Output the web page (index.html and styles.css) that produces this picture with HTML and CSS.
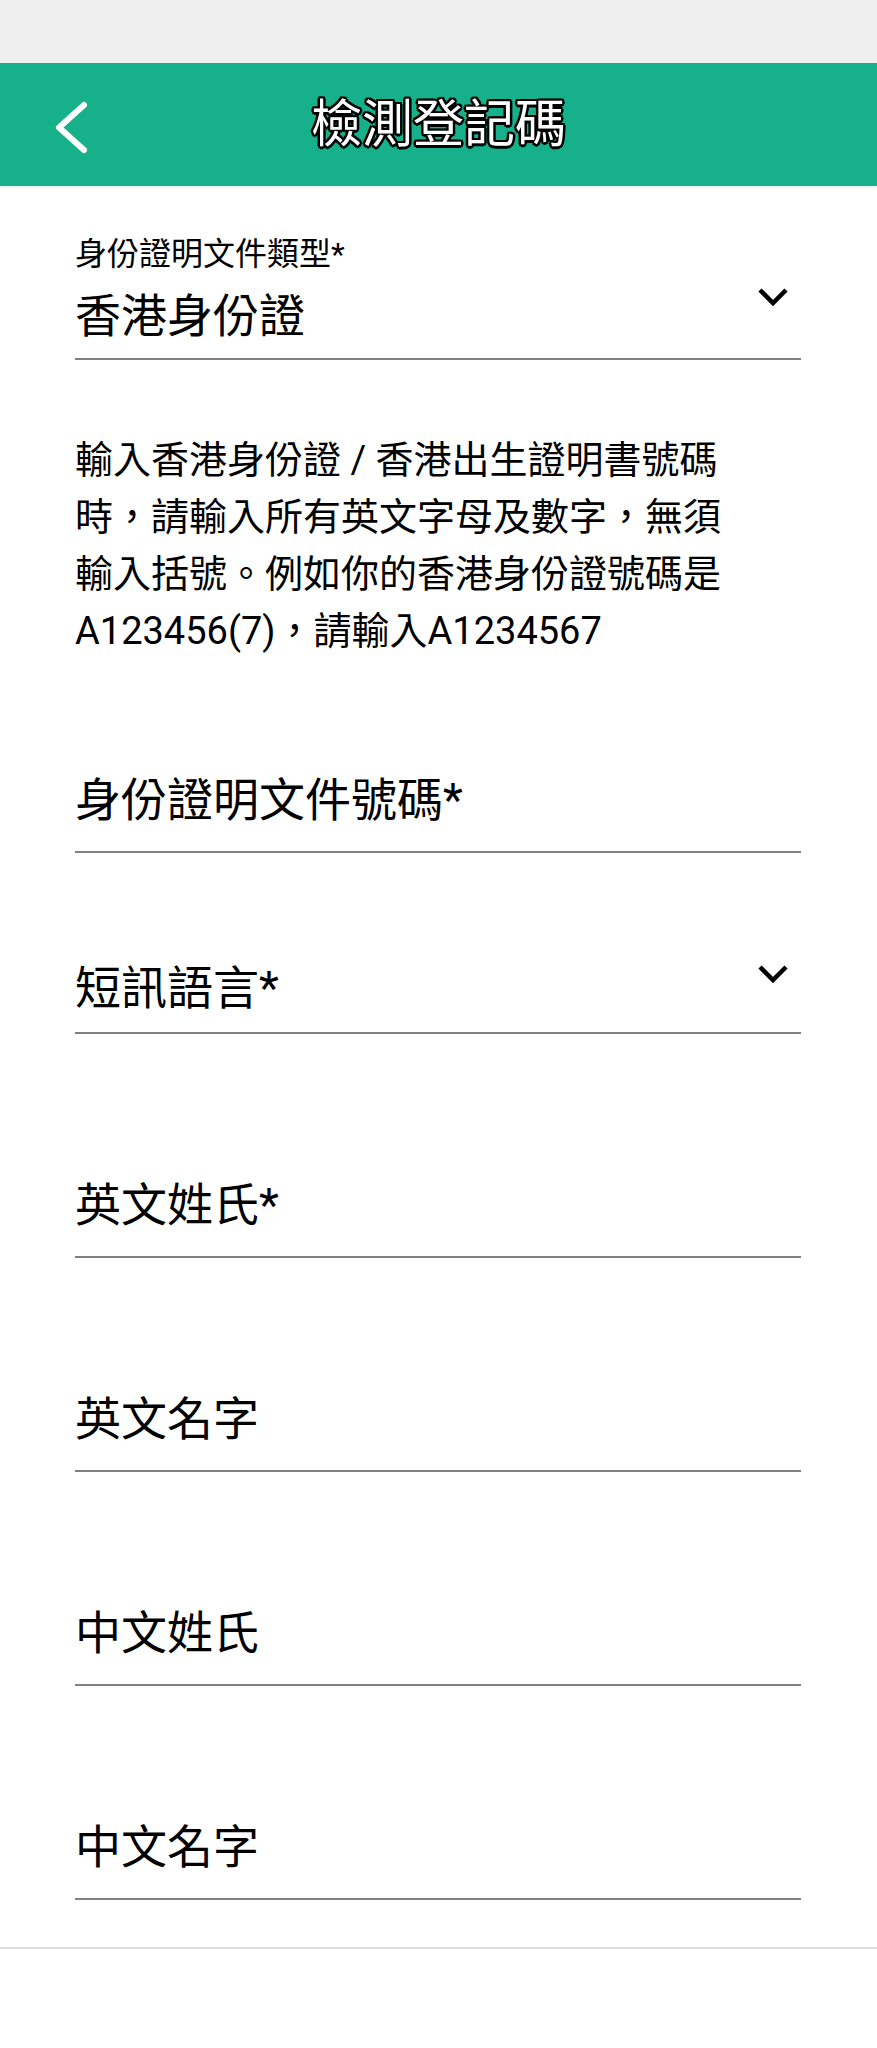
FILE: index.html
```html
<!DOCTYPE html>
<html lang="zh-Hant">
<head>
  <meta charset="UTF-8" />
  <meta name="viewport" content="width=device-width, initial-scale=1.0"/>
  <title>檢測登記碼</title>
  <link rel="stylesheet" href="styles.css">
</head>
<body>
  <div class="status-bar"></div>

  <header class="topbar">
    <a class="back" href="#">
      <svg width="40" height="60" viewBox="0 0 40 60">
        <polyline points="32,8 7,30.5 32,53" fill="none" stroke="#fff" stroke-width="6" stroke-linecap="round" stroke-linejoin="round"/>
      </svg>
    </a>
    <h1>檢測登記碼</h1>
    <span></span>
  </header>

  <main class="form">
    <div class="select-field">
      <div class="select-text">
        <div class="small-label">身份證明文件類型*</div>
        <div class="select-value">香港身份證</div>
      </div>
      <svg class="caret" width="32" height="20" viewBox="0 0 32 20">
        <polyline points="3,3 16,16 29,3" fill="none" stroke="#000" stroke-width="4.5"/>
      </svg>
    </div>

    <p class="hint">輸入香港身份證 / 香港出生證明書號碼時，請輸入所有英文字母及數字，無須輸入括號。例如你的香港身份證號碼是A123456(7)，請輸入A1234567</p>

    <div class="field field-id">身份證明文件號碼*</div>

    <div class="field field-lang">
      <span>短訊語言*</span>
      <svg class="caret" width="32" height="20" viewBox="0 0 32 20">
        <polyline points="3,3 16,16 29,3" fill="none" stroke="#000" stroke-width="4.5"/>
      </svg>
    </div>

    <div class="field field-surname">英文姓氏*</div>
    <div class="field">英文名字</div>
    <div class="field">中文姓氏</div>
    <div class="field">中文名字</div>
  </main>

  <div class="bottom-line"></div>
</body>
</html>
```

FILE: styles.css
```css
body {
  margin: 0;
  background-color: white;
  font-family: Roboto, "Noto Sans CJK TC", sans-serif;
  color: #000;
}
.status-bar {
  height: 63px;
  background-color: #efefef;
}
.topbar {
  height: 123px;
  background-color: #16b08a;
  display: grid;
  grid-template-columns: 1fr auto 1fr;
  align-items: center;
  box-shadow: 0 2px 3px rgba(0,0,0,0.08);
}
.back {
  display: flex;
  padding-left: 52px;
  padding-top: 4px;
}
.topbar h1 {
  margin: 0;
  font-size: 51px;
  font-weight: normal;
  line-height: 56px;
  color: white;
  text-shadow:
    2.5px 0 0 #000, -2.5px 0 0 #000, 0 2.5px 0 #000, 0 -2.5px 0 #000,
    1.8px 1.8px 0 #000, -1.8px 1.8px 0 #000, 1.8px -1.8px 0 #000, -1.8px -1.8px 0 #000;
}
.form {
  padding: 0 76px 0 75px;
}
.select-field {
  display: flex;
  justify-content: space-between;
  align-items: flex-start;
  margin-top: 52px;
  padding-bottom: 19px;
  border-bottom: 2px solid #808080;
}
.small-label {
  font-size: 32px;
  line-height: 32px;
}
.select-value {
  font-size: 46px;
  line-height: 46px;
  margin-top: 23px;
}
.caret {
  margin-top: 49px;
  margin-right: 12px;
}
.hint {
  max-width: 660px;
  margin: 72px 0 0;
  font-size: 38px;
  line-height: 57px;
}
.field {
  font-size: 46px;
  line-height: 46px;
  margin-top: 138px;
  padding-bottom: 28px;
  border-bottom: 2px solid #808080;
}
.field-id {
  margin-top: 117px;
}
.field-lang {
  display: flex;
  justify-content: space-between;
  align-items: flex-start;
  margin-top: 112px;
  padding-bottom: 21px;
}
.field-lang .caret {
  margin-top: -1px;
}
.field-surname {
  margin-top: 148px;
}
.bottom-line {
  margin-top: 47px;
  border-top: 2px solid #dedede;
}
```
